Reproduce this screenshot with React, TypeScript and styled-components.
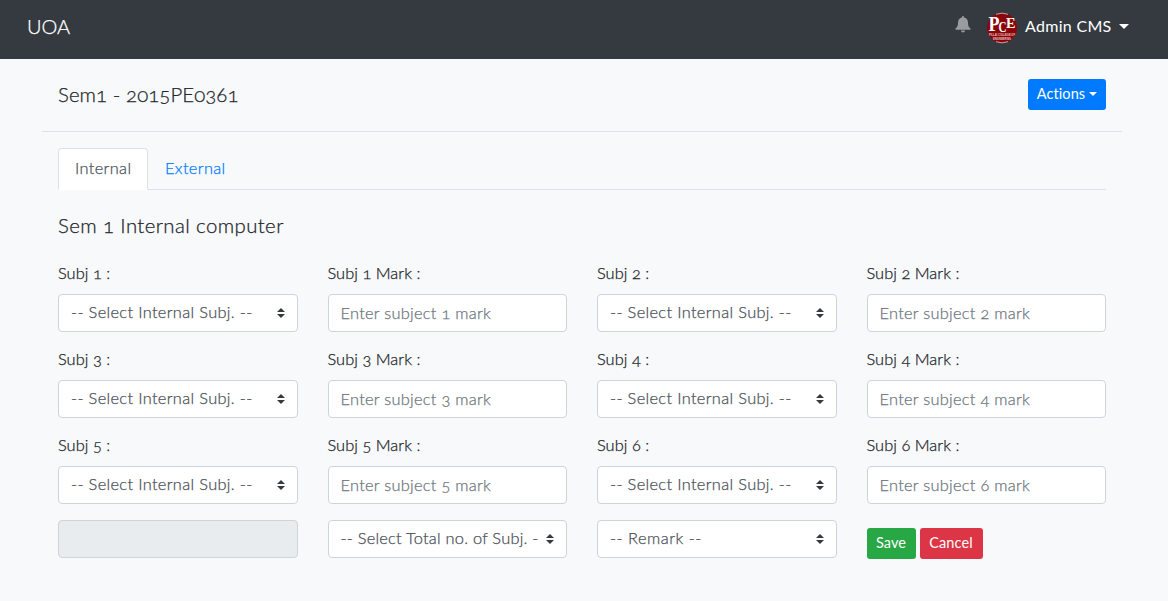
import React from "react";
import styled, { createGlobalStyle } from "styled-components";

const GlobalStyle = createGlobalStyle`
  *, *::before, *::after { box-sizing: border-box; }
  body {
    margin: 0;
    min-height: 100vh;
    background: #f8f9fb;
    color: #212529;
    font: 300 16.4px/24px Lato, "Liberation Sans", sans-serif;
    font-variant-numeric: oldstyle-nums;
    -webkit-text-stroke: 0.25px;
  }
  button, input, select { font: inherit; font-variant-numeric: inherit; }
`;

const Navbar = styled.header`
  display: flex;
  align-items: center;
  justify-content: space-between;
  height: 59px;
  padding: 0 39px 5px 27px;
  background: #343a40;
  color: #fff;
`;
const Brand = styled.div`
  padding-bottom: 2px;
  font-size: 20px;
  line-height: 30px;
`;
const UserMenu = styled.div`
  display: flex;
  align-items: center;
`;
const BellIcon = styled.svg`
  width: 16px;
  height: 17px;
  margin: 0 16px 5px 0;
  fill: #999c9f;
`;
const Logo = styled.svg`
  width: 30px;
  height: 30px;
  margin: 1px 8px 0 0;
  overflow: visible;
  -webkit-text-stroke: 0;
`;
const UserName = styled.span`
  width: 86px;
  margin-right: 8px;
  padding-bottom: 2px;
  font-size: 16px;
  font-weight: 400;
  white-space: nowrap;
  letter-spacing: 0.3px;
  -webkit-text-stroke: 0;
`;
const Caret = styled.span<{ $size: number }>`
  display: inline-block;
  margin-bottom: ${(p) => (p.$size > 4 ? 2 : 0)}px;
  border: ${(p) => p.$size}px solid transparent;
  border-top-color: currentColor;
  border-bottom: 0;
`;
const Main = styled.main`
  padding: 20px 46px 0 42px;
`;
const TitleBar = styled.div`
  display: flex;
  justify-content: space-between;
  height: 53px;
  padding: 0 16px;
  border-bottom: 1px solid #dee2e6;
`;
const Title = styled.h1<{ $spacing: number }>`
  margin: 0;
  font-size: 20.4px;
  font-weight: 300;
  line-height: 30px;
  letter-spacing: ${(p) => p.$spacing}px;
`;
const Button = styled.button<{ $color: string; $width: number }>`
  display: inline-flex;
  align-items: center;
  justify-content: center;
  gap: 4px;
  width: ${(p) => p.$width}px;
  height: 31px;
  padding: 0 0 2px;
  border: 0;
  border-radius: 3px;
  background: ${(p) => p.$color};
  color: #fff;
  font-size: 14.5px;
  font-weight: 400;
  letter-spacing: 0.1px;
  -webkit-text-stroke: 0;
`;
const Tabs = styled.nav`
  display: flex;
  height: 42px;
  margin: 16px 16px 0;
  border-bottom: 1px solid #dee2e6;
`;
const Tab = styled.a<{ $active?: boolean; $width: number }>`
  width: ${(p) => p.$width}px;
  height: 42px;
  padding: 7px 0 0 16px;
  border: 1px solid ${(p) => (p.$active ? "#dee2e6" : "transparent")};
  border-bottom-color: ${(p) => (p.$active ? "#fff" : "transparent")};
  border-radius: 4px 4px 0 0;
  background: ${(p) => (p.$active ? "#fff" : "transparent")};
  color: ${(p) => (p.$active ? "#495057" : "#007bff")};
  letter-spacing: 0.35px;
`;
const Section = styled.section`
  padding: 20px 16px 0;
`;
const FieldGrid = styled.div`
  display: grid;
  grid-template-columns: repeat(4, 1fr);
  gap: 15px 30px;
  margin-top: 21px;
`;
const Field = styled.label`
  display: flex;
  flex-direction: column;
  gap: 9px;
`;
const LabelText = styled.span`
  display: block;
  height: 24px;
  letter-spacing: 0.03px;
`;
const Input = styled.input`
  width: 100%;
  height: 38px;
  padding: 5px 12px 7px;
  border: 1px solid #ced4da;
  border-radius: 4px;
  background: #fff;
  color: #495057;
  letter-spacing: 0.27px;
  &::placeholder { color: #6c757d; opacity: 1; }
  &:disabled { background: #e9ecef; }
`;
const Select = styled.select<{ $spacing?: number }>`
  width: 100%;
  height: 38px;
  padding: 5px 28px 7px 12px;
  border: 1px solid #ced4da;
  border-radius: 4px;
  appearance: none;
  color: #495057;
  letter-spacing: ${(p) => p.$spacing ?? 0.34}px;
  background: #fff url("data:image/svg+xml,%3csvg xmlns='http://www.w3.org/2000/svg' viewBox='0 0 4 5'%3e%3cpath fill='%23343a40' d='M2 0L0 2h4zm0 5L0 3h4z'/%3e%3c/svg%3e") no-repeat right 12px center / 8px 10px;
`;
const FormFooter = styled.div`
  display: grid;
  grid-template-columns: repeat(4, 1fr);
  gap: 30px;
  margin-top: 16px;
`;
const ButtonGroup = styled.div`
  display: flex;
  gap: 4px;
  padding-top: 8px;
`;

const subjects = [1, 2, 3, 4, 5, 6];

export default function App() {
  return (
    <>
      <GlobalStyle />
      <Navbar>
        <Brand>UOA</Brand>
        <UserMenu>
          <BellIcon viewBox="0 0 16 17" aria-hidden="true">
            <path d="M7 1.4V1a1 1 0 0 1 2 0v.4c2.6.5 4 2.4 4 4.9 0 4 1 5.1 2.4 6.2.5.4.3 1.2-.4 1.2H1c-.7 0-.9-.8-.4-1.2C2 11.4 3 10.3 3 6.3c0-2.500 1.400-4.400 4-4.900zM6 14.500h4a2 2 0 0 1-4 0z" />
          </BellIcon>
          <Logo viewBox="0 0 30 30" aria-label="PCE">
            <circle cx="15" cy="15" r="15" fill="#8b0508" />
            <path d="M9 1.3Q15-1 21 1.3M9 28.7Q15 31 21 28.7" fill="none" stroke="#d9c9ca" strokeWidth="0.8" />
            <g fill="#fff" fontFamily="Liberation Serif, serif" fontWeight="700">
              <text x="1.5" y="17.5" fontSize="21" textLength="11" lengthAdjust="spacingAndGlyphs">P</text>
              <text x="11.5" y="18.7" fontSize="14" textLength="8" lengthAdjust="spacingAndGlyphs">C</text>
              <text x="19" y="15" fontSize="15" textLength="9.5" lengthAdjust="spacingAndGlyphs">E</text>
            </g>
            <g fill="#e8c9c9" fontFamily="Liberation Sans, sans-serif" fontWeight="700" fontSize="3.5">
              <text x="2" y="22.8" textLength="26" lengthAdjust="spacingAndGlyphs">PILLAI COLLEGE OF</text>
              <text x="6" y="26.6" textLength="18" lengthAdjust="spacingAndGlyphs">ENGINEERING</text>
            </g>
          </Logo>
          <UserName>Admin CMS</UserName>
          <Caret $size={5} />
        </UserMenu>
      </Navbar>
      <Main>
        <TitleBar>
          <Title $spacing={0.08}>Sem1 - 2015PE0361</Title>
          <Button $color="#007bff" $width={78}>
            Actions <Caret $size={4} />
          </Button>
        </TitleBar>
        <Tabs>
          <Tab $active $width={90}>Internal</Tab>
          <Tab $width={94}>External</Tab>
        </Tabs>
        <Section>
          <Title as="h2" $spacing={0.4}>Sem 1 Internal computer</Title>
          <FieldGrid>
            {subjects.map((n) => (
              <React.Fragment key={n}>
                <Field>
                  <LabelText>Subj {n} :</LabelText>
                  <Select><option>-- Select Internal Subj. --</option></Select>
                </Field>
                <Field>
                  <LabelText>Subj {n} Mark :</LabelText>
                  <Input placeholder={`Enter subject ${n} mark`} />
                </Field>
              </React.Fragment>
            ))}
          </FieldGrid>
          <FormFooter>
            <Input disabled />
            <Select $spacing={0.23}><option>-- Select Total no. of Subj. --</option></Select>
            <Select $spacing={0.5}><option>-- Remark --</option></Select>
            <ButtonGroup>
              <Button $color="#28a745" $width={49}>Save</Button>
              <Button $color="#dc3545" $width={63}>Cancel</Button>
            </ButtonGroup>
          </FormFooter>
        </Section>
      </Main>
    </>
  );
}
